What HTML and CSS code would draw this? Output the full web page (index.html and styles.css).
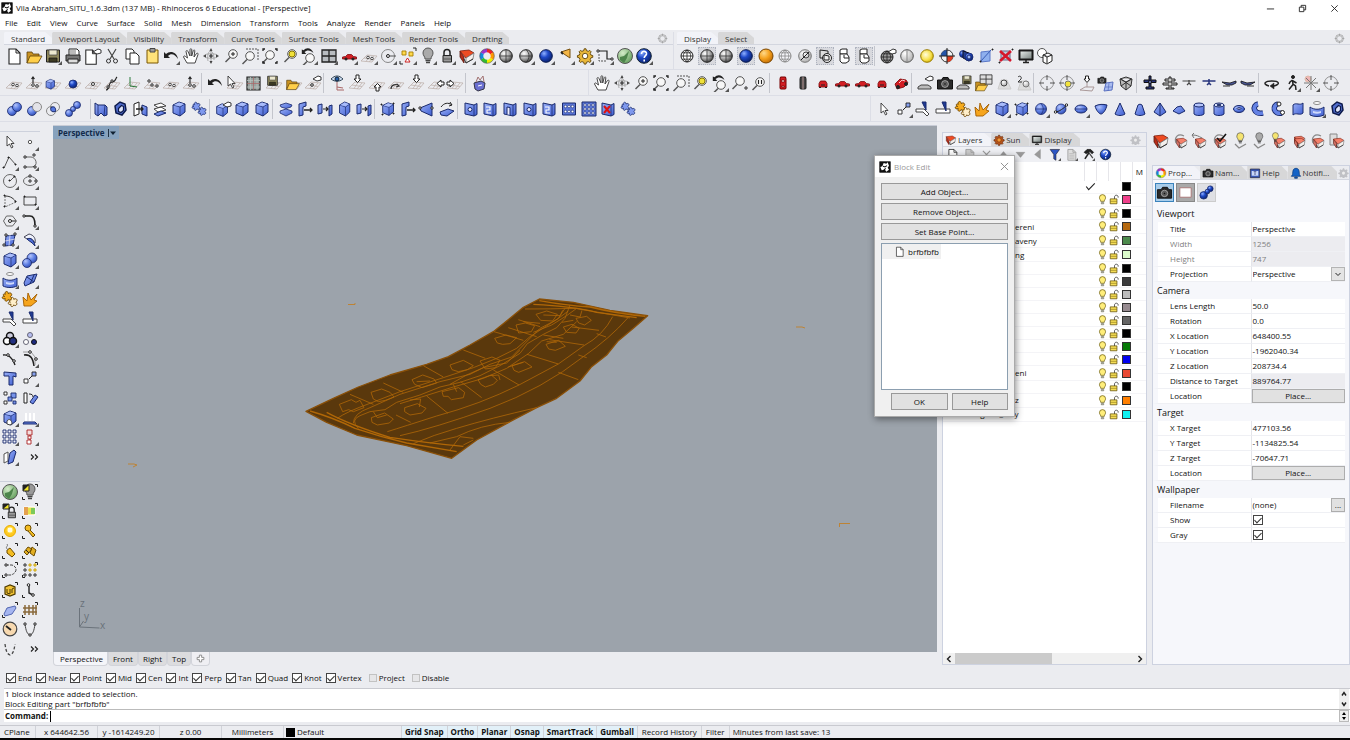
FILE: index.html
```html
<!DOCTYPE html>
<html lang="en">
<head>
<meta charset="utf-8">
<title>Vila Abraham_SITU_1.6.3dm - Rhinoceros 6 Educational</title>
<link rel="stylesheet" href="styles.css">
</head>
<body>
<svg class="defs" aria-hidden="true">
  <defs>
    <radialGradient id="gBlue" cx=".35" cy=".3" r=".8"><stop offset="0" stop-color="#b3c4fb"/><stop offset=".5" stop-color="#5f80e4"/><stop offset="1" stop-color="#2a44a8"/></radialGradient>
    <radialGradient id="gDeep" cx=".35" cy=".3" r=".8"><stop offset="0" stop-color="#8fb0ff"/><stop offset=".4" stop-color="#1f49c8"/><stop offset="1" stop-color="#071c60"/></radialGradient>
    <radialGradient id="gGray" cx=".35" cy=".3" r=".8"><stop offset="0" stop-color="#fff"/><stop offset=".5" stop-color="#aaa"/><stop offset="1" stop-color="#333"/></radialGradient>
    <radialGradient id="gPale" cx=".35" cy=".3" r=".8"><stop offset="0" stop-color="#fff"/><stop offset="1" stop-color="#a9a9a9"/></radialGradient>
    <radialGradient id="gOrange" cx=".35" cy=".3" r=".8"><stop offset="0" stop-color="#ffd98a"/><stop offset=".5" stop-color="#f5a01c"/><stop offset="1" stop-color="#b76400"/></radialGradient>
    <radialGradient id="gYellow" cx=".4" cy=".4" r=".7"><stop offset="0" stop-color="#fffde0"/><stop offset=".6" stop-color="#f7e04a"/><stop offset="1" stop-color="#cba800"/></radialGradient>
    <radialGradient id="gGreen" cx=".35" cy=".3" r=".8"><stop offset="0" stop-color="#d3ecc8"/><stop offset="1" stop-color="#5d9a56"/></radialGradient>
    <linearGradient id="gFace" x1="0" y1="0" x2="1" y2="1"><stop offset="0" stop-color="#9ab0f7"/><stop offset="1" stop-color="#3f5fd2"/></linearGradient>
    <linearGradient id="gScreen" x1="0" y1="0" x2="1" y2="1"><stop offset="0" stop-color="#e3e8e6"/><stop offset="1" stop-color="#7d8784"/></linearGradient>
  </defs>
</svg>

<header class="titlebar">
  <span class="app-icon" data-icon="rhino"></span>
  <h1>Vila Abraham_SITU_1.6.3dm (137 MB) - Rhinoceros 6 Educational - [Perspective]</h1>
  <div class="window-buttons">
    <button aria-label="Minimize"><svg viewBox="0 0 10 10"><path d="M1 5.500h8" class="ln"/></svg></button>
    <button aria-label="Restore"><svg viewBox="0 0 10 10"><path d="M1.500 3.500h5v5h-5zM3.500 3.500v-2h5v5h-2" class="ln"/></svg></button>
    <button aria-label="Close"><svg viewBox="0 0 10 10"><path d="M1.500 1.500l7 7m0-7l-7 7" class="ln"/></svg></button>
  </div>
</header>

<nav class="menubar">
  <button>File</button><button>Edit</button><button>View</button><button>Curve</button><button>Surface</button><button>Solid</button><button>Mesh</button><button>Dimension</button><button>Transform</button><button>Tools</button><button>Analyze</button><button>Render</button><button>Panels</button><button>Help</button>
</nav>

<section class="toolbars">
  <div class="band band-top">
    <div class="group">
      <div class="tabs">
        <button class="tab active">Standard</button><button class="tab">Viewport Layout</button><button class="tab">Visibility</button><button class="tab">Transform</button><button class="tab">Curve Tools</button><button class="tab">Surface Tools</button><button class="tab">Mesh Tools</button><button class="tab">Render Tools</button><button class="tab">Drafting</button>
        <button class="gear" aria-label="Toolbar options" data-icon="cog"></button>
      </div>
      <div class="tools t-standard" data-tools="new open save+ print export cut copy paste undo+ pan orbit zoom zoomwin zoomext zoomsel undoview+ views+ car+ cplane+ osnap+ shapes+ bulb+ lock+ layer+ wheel+ sphere shaded+ bluesphere+ spot+ gearwheel+ dimension+ green help+"></div>
    </div>
    <div class="group">
      <div class="tabs">
        <button class="tab active">Display</button><button class="tab">Select</button>
        <button class="gear" aria-label="Toolbar options" data-icon="cog"></button>
      </div>
      <div class="tools t-display" data-tools="globe *sphere sphere *bluesphere orange ghost xray *tech artistic *pen | globehand pale yellow fourcolor bluecams bluebox redx monitor outline"></div>
    </div>
  </div>
  <div class="band band-mid">
    <div class="group"><div class="tools t-cplane" data-tools="cplane cpup cpbox cpball cpone cpcurve cpz cp3 cplane cpup | undo cparrow grid savecp opencp cphand | cpeye cpdown cpupa cpturn cpdown cpleft cpright | basket"></div></div>
    <div class="group grip"><div class="tools t-view" data-tools="pan orbit zoom zoomext zoomwin zoomsel undoview+ zoomtarget one | cartop carblack carfront car car carfront carangle | carhand camera savecar openviews lampcone lamptwo | target targety axis camplane boxwire | planetop planetop2 planefront planeblue heli heli2 | turn walk+ star+ target"></div></div>
  </div>
  <div class="band band-low">
    <div class="group"><div class="tools t-solid" data-tools="balls ballsub ballint balls2 || folded nut arrowdoor stack cube puzzle | cubehand cube cube | slabs doorin doorout door doorout | cubepts doorin wedge rotslab | holeslab bslab doorslab holeslab bslab gridholes gridholes2 redslab puzzle"></div></div>
    <div class="group grip"><div class="tools t-prims" data-tools="arrow squares+ trimk splitk join burst cube+ cubepts ball+ ballpts ellips+ parab cone tcone pyramid tpyr cyl tube torus pipe pipe2 slab curtain+ nut"></div></div>
  </div>
</section>

<main class="workspace">
  <aside class="sidebar">
    <div class="side-tools side-main" data-tools="arrow dot+ poly+ curve+ circle+ ellipse+ arc+ rect+ hexa+ fillet+ srf+ bend+ cube+ twoballs+ curtain+ mesh+ join burst trimk splitk rings+ tricirc curveedit curvepts+ text squares+ array rotbox cubecut+ extrude+ gridpts+ align+ pair+ more"></div>
    <div class="side-tools side-select" data-tools="green ^bulbsel ^locksel ^colorsel ^glow ^key ^tag ^tags ^curvesel ^ptsel ^boxsel ^linksel ^plate ^fence gauge vee veedash more"></div>
  </aside>

  <section class="viewport-column">
    <div class="viewport">
      <button class="viewport-title">Perspective <svg viewBox="0 0 8 8"><path d="M.5 0v8" stroke="#234"/><path d="M2 2.500h6L5 6z" fill="#123"/></svg></button>
      <svg class="scene" viewBox="0 0 884 526" preserveAspectRatio="xMinYMin slice" role="img" aria-label="Terrain model">
        <g transform="translate(237 159) scale(.33333)" fill="none" stroke="#b06707" stroke-width="2.400" stroke-linejoin="round">
          <path fill="#5a380c" stroke="#8a5008" stroke-width="4" d="M48 379L130 340 205 306 300 270 410 238 475 215 540 180 610 140 660 100 700 67 748 42 850 52 960 76 1073 92 1030 130 985 167 950 210 905 245 870 288 800 340 740 368 660 410 560 465 485 520 350 482 200 450 110 412Z"/>
          <path stroke-width="4" d="M60 378Q130 398 195 430Q270 455 350 474L500 500M110 382Q180 420 300 457Q420 475 520 484M748 47Q830 62 900 66Q980 86 1066 94M730 58Q850 64 920 82L1040 98"/>
          <path d="M705 72Q780 72 858 70L1020 99M685 104L750 125M655 128L740 155M612 140L700 166M520 195L586 220M400 242L460 276M280 294L340 322M180 328L250 358M318 390L362 412M410 333L474 385M512 290L575 338M610 255L687 300M711 208L805 237M778 164L882 180M845 126L927 136M968 95Q940 150 882 182L805 237 687 300Q570 358 440 393Q340 425 292 440M1014 98Q960 160 880 215Q760 310 600 370Q430 430 330 452M920 146L948 156M865 210L890 218M805 262L865 284M740 368Q600 400 500 430Q430 450 370 476M660 412Q570 420 500 455L420 474M550 460L510 455 480 495M520 480L550 465"/>
          <path d="M205 430Q180 405 210 392L240 380 285 374 320 352 390 330 450 306 510 292 570 272 630 242 690 205 712 176 760 148 800 128 825 100 840 60M190 415Q190 385 240 368L330 328 450 290 540 268 600 238 665 216 712 168 750 130 800 104 835 78M142 400Q170 380 240 355L330 320 460 278 550 248 620 220 680 190 720 155 805 100 825 70M330 356L395 336 490 306 580 280 650 250 715 206 755 168 820 148 860 110M480 298L530 270 580 248 650 234 690 196M730 142L785 120 830 92 860 70"/>
          <path d="M148 358L184 344 198 352 210 346 222 368 190 380 176 374 158 380ZM243 322L275 312 300 322 312 336 286 346 265 350 250 342ZM366 284L398 270 432 282 440 294 396 308 374 298ZM480 240L520 226 550 242 532 254 505 260 486 254ZM570 228L606 216 630 226 616 248 586 252ZM614 160L648 150 680 158 660 176 638 178 622 174ZM678 120L706 114 734 122 724 140 686 144ZM738 88L770 78 802 88 788 108 752 106ZM858 100L890 94 904 106 884 120 866 114ZM820 126L846 118 868 130 858 144 830 142ZM768 178L806 166 826 184 796 196 776 192ZM666 242L704 230 726 246 686 262 672 256ZM564 284L604 270 622 286 610 298 586 306 572 298ZM456 320L506 308 524 322 520 338 484 344 474 334 460 334ZM344 368L382 356 408 370 396 384 360 390 344 380ZM244 398L284 384 310 402 298 414 262 420 246 412Z"/>
          <path d="M760 90L810 92 818 76M750 115L700 110M840 90L870 96 876 76M816 112L850 106M760 150L820 160M770 170L800 172M600 272L626 270 630 285M380 290L420 288M360 345L392 342 388 366M250 380L262 398 290 390M490 298L500 320M655 246L700 232"/>
        </g>
        <g fill="none" stroke="#bd8335"><path d="M295 178.500h7v-1.500M743 201h6l3 1M75 338h6l3 1-4 2M786 397.500h11M786.500 397v4"/></g>
        <g fill="none" stroke="#6b737b"><path d="M26.500 482v19l20 1M26.500 501l4-6"/></g>
        <g class="axis-text"><text x="27" y="481">z</text><text x="31" y="494">y</text><text x="47" y="503">x</text></g>
      </svg>
    </div>
    <div class="view-tabs">
      <button class="active">Perspective</button><button>Front</button><button>Right</button><button>Top</button><button class="add" aria-label="Add viewport"><svg viewBox="0 0 8 8"><path d="M3 1h2v2h2v2H5v2H3V5H1V3h2z" fill="#fff" stroke="#777" stroke-width=".7"/></svg></button>
    </div>
  </section>

  <aside class="panel layers">
    <div class="tabs panel-tabs">
      <button class="tab active"><i data-icon="layer"></i>Layers</button><button class="tab"><i data-icon="sun"></i>Sun</button><button class="tab"><i data-icon="monitor"></i>Display</button>
      <button class="gear" aria-label="Panel options" data-icon="cogsolid"></button>
    </div>
    <div class="layer-tools" data-tools="new newgray xgray upgray downgray leftgray filter+ listgray+ hammer+ help"></div>
    <table class="layer-table">
      <thead><tr><th class="name"></th><th></th><th></th><th></th><th></th><th>M</th></tr></thead>
      <tbody id="layer-rows"></tbody>
    </table>
    <div class="hscroll">
      <button aria-label="Scroll left"><svg viewBox="0 0 8 8"><path d="M5.500 1L2.500 4l3 3" class="ln bold"/></svg></button>
      <div class="track"><div class="thumb"></div></div>
      <button aria-label="Scroll right"><svg viewBox="0 0 8 8"><path d="M2.500 1l3 3-3 3" class="ln bold"/></svg></button>
    </div>
  </aside>

  <aside class="properties-column">
    <div class="tools t-layers" data-tools="layer layerarc layerarrow layercheck bulblay bulbgray layerbulb layerarc2 layerarc layerdoc"></div>
    <div class="panel properties">
      <div class="tabs panel-tabs">
        <button class="tab active"><i data-icon="wheel"></i>Prop...</button><button class="tab"><i data-icon="camera"></i>Nam...</button><button class="tab"><i data-icon="helpbook"></i>Help</button><button class="tab"><i data-icon="bell"></i>Notifi...</button>
        <button class="gear" aria-label="Panel options" data-icon="cogsolid"></button>
      </div>
      <div class="modes">
        <button class="on" aria-label="Viewport" data-icon="camera"></button><button class="frame" aria-label="Frame" data-icon="framebox"></button><button aria-label="Material" data-icon="balls2deep"></button>
      </div>
      <h2>Viewport</h2>
      <dl>
        <dt>Title</dt><dd>Perspective</dd>
        <dt class="dim">Width</dt><dd class="dim fill">1256</dd>
        <dt class="dim">Height</dt><dd class="dim fill">747</dd>
        <dt><label for="projection">Projection</label></dt><dd class="select"><select id="projection"><option>Perspective</option></select><svg viewBox="0 0 8 8"><path d="M1.500 3L4 5.500 6.500 3" class="ln"/></svg></dd>
      </dl>
      <h2>Camera</h2>
      <dl>
        <dt>Lens Length</dt><dd>50.0</dd>
        <dt>Rotation</dt><dd>0.0</dd>
        <dt>X Location</dt><dd>648400.55</dd>
        <dt>Y Location</dt><dd>-1962040.34</dd>
        <dt>Z Location</dt><dd>208734.4</dd>
        <dt>Distance to Target</dt><dd class="fill">889764.77</dd>
        <dt>Location</dt><dd class="act"><button class="push">Place...</button></dd>
      </dl>
      <h2>Target</h2>
      <dl>
        <dt>X Target</dt><dd>477103.56</dd>
        <dt>Y Target</dt><dd>-1134825.54</dd>
        <dt>Z Target</dt><dd>-70647.71</dd>
        <dt>Location</dt><dd class="act"><button class="push">Place...</button></dd>
      </dl>
      <h2>Wallpaper</h2>
      <dl>
        <dt>Filename</dt><dd class="file"><span>(none)</span><button class="push">...</button></dd>
        <dt><label for="show">Show</label></dt><dd><input type="checkbox" id="show" checked></dd>
        <dt><label for="gray">Gray</label></dt><dd><input type="checkbox" id="gray" checked></dd>
      </dl>
    </div>
  </aside>

  <section class="dialog" role="dialog" aria-label="Block Edit">
    <header><span data-icon="rhino"></span><h2>Block Edit</h2><button aria-label="Close"><svg viewBox="0 0 10 10"><path d="M1 1l8 8m0-8L1 9" stroke="#888" fill="none"/></svg></button></header>
    <div class="dialog-body">
      <button class="push">Add Object...</button>
      <button class="push">Remove Object...</button>
      <button class="push">Set Base Point...</button>
      <ul class="block-list"><li><i data-icon="new"></i>brfbfbfb</li></ul>
      <div class="dialog-actions"><button class="push">OK</button><button class="push">Help</button></div>
    </div>
  </section>
</main>

<section class="osnap">
  <label><input type="checkbox" checked>End</label><label><input type="checkbox" checked>Near</label><label><input type="checkbox" checked>Point</label><label><input type="checkbox" checked>Mid</label><label><input type="checkbox" checked>Cen</label><label><input type="checkbox" checked>Int</label><label><input type="checkbox" checked>Perp</label><label><input type="checkbox" checked>Tan</label><label><input type="checkbox" checked>Quad</label><label><input type="checkbox" checked>Knot</label><label><input type="checkbox" checked>Vertex</label><label class="wide"><input type="checkbox" class="faint">Project</label><label class="wide"><input type="checkbox" class="faint">Disable</label>
</section>

<section class="command">
  <div class="history"><p>1 block instance added to selection.</p><p>Block Editing part "brfbfbfb"</p>
    <div class="arrows"><svg viewBox="0 0 8 8"><path d="M2 5.500l2-3 2 3" class="ln bold"/></svg><svg viewBox="0 0 8 8"><path d="M2 2.500l2 3 2-3" class="ln bold"/></svg></div>
  </div>
  <div class="prompt"><label for="cmd">Command:</label><span class="caret"></span><input id="cmd" type="text">
    <div class="arrows boxed"><svg viewBox="0 0 8 5"><path d="M2 4l2-3 2 3z"/></svg><svg viewBox="0 0 8 5"><path d="M2 1l2 3 2-3z"/></svg></div>
  </div>
</section>

<footer class="status">
  <span class="s-cplane">CPlane</span><span class="s-num">x 644642.56</span><span class="s-num">y -1614249.20</span><span class="s-num">z 0.00</span><span class="s-num">Millimeters</span><span class="s-layer"><i></i>Default</span>
  <button class="on">Grid Snap</button><button class="on">Ortho</button><button class="on">Planar</button><button class="on">Osnap</button><button class="on">SmartTrack</button><button class="on">Gumball</button><button>Record History</button><button>Filter</button><span class="s-last">Minutes from last save: 13</span>
</footer>
<script src="app.js"></script>
</body>
</html>
```
FILE: styles.css
```css
* { box-sizing: border-box; }
body {
  margin: 0;
  min-height: 100vh;
  display: flex;
  flex-direction: column;
  background: #ebecf0;
  color: #111;
  font: 8px/12px "Open Sans", "Noto Sans", sans-serif;
  overflow: hidden;
}
button, input, select { font: inherit; color: inherit; margin: 0; }
button { background: none; border: 0; padding: 0; white-space: nowrap; }
h1, h2, p, ul, dl, dd, dt { margin: 0; padding: 0; font-weight: 400; }
ul { list-style: none; }
svg { display: block; }
.defs { position: absolute; width: 0; height: 0; }
.ln { fill: none; stroke: #222; stroke-width: 1; }
.bold { stroke-width: 1.4; }

.titlebar { display: flex; align-items: center; height: 16px; background: #fff; padding-left: 1px; gap: 3px; }
.titlebar h1 { font-size: 8px; flex: 1; }
.app-icon svg { width: 12px; height: 12px; }
.window-buttons { display: flex; }
.window-buttons button { width: 32px; display: grid; place-items: center; }
.window-buttons svg { width: 9px; height: 9px; }
.menubar { display: flex; gap: 9px; padding-left: 5px; height: 14px; background: #fff; }
.menubar button { line-height: 14px; }

.toolbars { display: flex; flex-direction: column; padding-top: 2px; height: 95px; }
.band { display: grid; border-bottom: 1px solid #dcdee6; height: 26px; }
.band-top { grid-template-columns: 673fr 677fr; height: 38px; }
.band-mid { grid-template-columns: 588fr 762fr; }
.band-low { grid-template-columns: 870fr 480fr; }
.group { display: flex; flex-direction: column; min-width: 0; padding-left: 4px; border-left: 1px solid #dcdee6; justify-content: center; }
.group:first-child { border-left: 0; }
.band-top .group { justify-content: flex-start; padding-left: 3px; }
.band-top .group:first-child { padding-left: 4px; }
.band:not(.band-top) .grip { padding-left: 3px; }
.tools { display: flex; align-items: center; height: 22px; }
.t-standard { width: 650px; }
.t-display { width: 378px; }
.t-cplane { width: 485px; }
.t-view { width: 749px; }
.t-solid { width: 634px; }
.t-prims { width: 473px; }
.t-layers { width: 197px; height: 32px; }
.tool { flex: 1 1 0; min-width: 0; display: grid; place-items: center; }
.tool svg { width: 18px; height: 18px; }
.tool.boxed svg { background: #d8d9de; outline: 1px dotted #aeb3bf; outline-offset: -1px; }
.sep { flex: 0 0 4px; height: 20px; border-left: 1px solid #c3c5cc; }
.sep.double { flex-basis: 8px; border-right: 1px solid #c3c5cc; border-left: 0; }

.tabs { display: flex; height: 13px; border-bottom: 1px solid #d3d6df; }
.tab {
  padding: 0 7px;
  line-height: 13px;
  background: #d7d7d8;
  color: #333;
  clip-path: polygon(0 100%, 0 1px, 1px 0, calc(100% - 7px) 0, 100% 6px, 100% 100%);
}
.tab.active { background: #f2f3f8; }
.gear { margin-left: auto; padding-right: 5px; }
.gear svg { width: 11px; height: 11px; }

.workspace { flex: 1; display: flex; position: relative; min-height: 0; }
.sidebar { width: 53px; flex: none; padding: 6px 13px 0 0; }
.side-tools { display: grid; grid-template-columns: 1fr 1fr; grid-auto-rows: 1fr; border-top: 1px solid #cdd1dc; }
.side-main { height: 336px; }
.side-select { height: 178px; margin-top: 14px; }

.viewport-column { flex: 1; min-width: 0; display: flex; flex-direction: column; }
.viewport { flex: 1; min-height: 0; position: relative; background: #9ca3ab; overflow: hidden; border-top: 1px solid #c8ccd6; }
.viewport-title { position: absolute; left: 0; top: 0; z-index: 1; display: flex; align-items: center; gap: 4px; height: 13px; padding: 0 3px 0 5px; background: #87a2bd; font-weight: 700; color: #122a4a; }
.viewport-title svg { width: 8px; height: 8px; }
.scene { width: 100%; height: 100%; }
.axis-text { font-size: 10px; fill: #697179; }
.view-tabs { display: flex; height: 17px; padding-bottom: 3px; }
.view-tabs button { background: #dcdcde; padding: 0 4px; border-radius: 0 0 4px 4px; border: 1px solid #d2d4da; border-top: 0; height: 14px; }
.view-tabs .active { background: #f4f5f9; padding-left: 6px; }
.view-tabs .add { background: #efeff3; padding: 0 4px; }
.add svg { width: 9px; height: 9px; }

.panel { border: 1px solid #cdd2e0; background: #f6f7fb; display: flex; flex-direction: column; }
.layers { width: 205px; flex: none; margin: 7px 4px 4px 5px; background: #fff; }
.panel-tabs { height: 14px; background: #ebecf0; flex: none; }
.panel-tabs .tab { display: flex; align-items: center; gap: 1px; padding: 0 9px 0 2px; }
.panel-tabs i svg { width: 12px; height: 12px; }
.layer-tools { display: flex; height: 15px; background: #eff0f4; padding-left: 1px; width: 100%; flex: none; }
.layer-tools .tool { flex: 0 0 17px; }
.layer-tools .tool svg { width: 13px; height: 13px; }
.layer-table { width: 100%; height: 260px; border-collapse: collapse; table-layout: fixed; flex: none; }
.layer-table th, .layer-table td { padding: 0; width: 12px; font-weight: 400; text-align: center; line-height: 12px; white-space: nowrap; }
.layer-table th { height: 19px; border-left: 1px solid #e6e6ea; }
.layer-table th.name { width: auto; border: 0; }
.layer-table th:last-child, .layer-table td:last-child { width: 14px; }
.layer-table td { border-bottom: 1px solid #f4f4f7; }
.layer-table td:first-child { text-align: left; }
.layer-table td span { display: block; padding-left: 72px; }
.layer-table td span.full { padding-left: 28px; }
.layer-table td svg { width: 11px; height: 11px; margin: auto; }
.swatch { display: block; width: 9px; height: 9px; margin: auto; border: 1px solid #333; }
.hscroll { margin-top: auto; display: flex; height: 11px; background: #f0f0f0; }
.hscroll button { width: 12px; display: grid; place-items: center; }
.hscroll svg { width: 8px; height: 8px; }
.track { flex: 1; }
.thumb { width: 54%; height: 100%; background: #cbcbcb; }

.properties-column { width: 199px; flex: none; display: flex; flex-direction: column; padding-bottom: 4px; }
.properties { flex: 1; margin: 8px 0 0 1px; }
.properties .panel-tabs .tab { padding-right: 8px; clip-path: polygon(0 0, calc(100% - 6px) 0, 100% 6px, 100% 100%, 0 100%); }
.properties .gear { padding: 0; }
.modes { display: flex; gap: 2px; padding: 3px 0 0 2px; height: 25px; }
.modes button { width: 19px; height: 19px; display: grid; place-items: center; background: #dfe0e4; border: 1px solid #ccc; }
.modes .on { background: #a9cdea; border-color: #3b83bc; }
.modes .frame { background: #a9a9a9; border-color: #888; }
.modes svg { width: 17px; height: 17px; }
.properties h2 { font-size: 9px; line-height: 17px; padding-left: 4px; }
.properties dl { display: grid; grid-template-columns: 97fr 94fr; grid-auto-rows: 15px; margin-right: 4px; background: #fff; }
dt, dd { line-height: 14px; border-bottom: 1px solid #eff0f4; }
dt { padding-left: 12px; border-left: 5px solid #f6f7fb; }
dd { padding-left: 1px; border-left: 1px solid #e4e5ea; }
.dim { color: #808080; }
.fill { background: #ececf0; }
.push { background: #e1e1e1; border: 1px solid #adadad; line-height: 12px; text-align: center; }
.act { padding-left: 0; }
.act .push { width: 100%; height: 14px; }
.file { display: flex; justify-content: space-between; }
.file .push { width: 14px; height: 14px; }
.select { display: flex; }
.select select { appearance: none; border: 0; background: none; padding: 0; flex: 1; min-width: 0; }
.select svg { width: 14px; height: 14px; padding: 2px; background: #e4e4e4; border: 1px solid #b4b4b4; }

input[type="checkbox"] { appearance: none; width: 10px; height: 10px; border: 1px solid #444; background: #fff; display: inline-grid; place-items: center; vertical-align: middle; }
input[type="checkbox"]:checked::after { content: ""; width: 3px; height: 6px; border: solid #333; border-width: 0 1px 1px 0; transform: rotate(45deg); margin-bottom: 2px; }
dd input[type="checkbox"] { display: grid; margin-top: 2px; }
input.faint { border-color: #c2c2c2; background: #e6e6e8; width: 8px; height: 8px; }

.dialog { position: absolute; top: 30px; right: 335px; width: 141px; background: #f0f0f0; border: 1px solid #aaa; box-shadow: 1px 2px 7px rgba(0, 0, 0, .45); }
.dialog header { display: flex; align-items: center; gap: 3px; height: 21px; padding: 0 5px 0 4px; background: #fff; }
.dialog header h2 { flex: 1; color: #999; font-size: 8px; }
.dialog header span svg { width: 12px; height: 12px; }
.dialog header button svg { width: 9px; height: 9px; }
.dialog-body { display: flex; flex-direction: column; gap: 3px; padding: 6px; }
.dialog .push { height: 17px; line-height: 15px; border-color: #999; }
.block-list { height: 147px; background: #fff; border: 1px solid #8c9fb0; }
.block-list li { display: inline-flex; align-items: center; gap: 3px; background: #f0f0f0; height: 15px; padding: 0 2px 0 12px; }
.block-list svg { width: 11px; height: 11px; }
.dialog-actions { display: flex; gap: 4px; padding-left: 10px; }
.dialog-actions .push { flex: 1; }

.osnap { display: flex; align-items: center; gap: 4px; height: 19px; padding: 0 0 1px 6px; }
.osnap label { display: flex; align-items: center; gap: 2px; }
.osnap .wide { margin-left: 3px; }
.command { border-top: 1px solid #c9cad0; background: #fff; margin-left: 4px; }
.history { position: relative; height: 21px; padding-left: 1px; border-bottom: 1px solid #bbb; }
.history p { line-height: 10px; }
.prompt { position: relative; display: flex; height: 12px; align-items: center; padding-left: 1px; }
.prompt label { font-weight: 700; }
.prompt input { flex: 1; border: 0; outline: 0; background: none; padding: 0 2px; height: 11px; }
.caret { width: 1px; height: 11px; background: #000; margin-left: 2px; }
.arrows { position: absolute; right: 1px; top: 0; bottom: 0; width: 10px; background: #efefef; display: flex; flex-direction: column; justify-content: space-around; align-items: center; }
.arrows svg { width: 8px; height: 8px; }
.arrows.boxed { border: 1px solid #bbb; }
.arrows.boxed svg { height: 5px; }

.status { display: flex; height: 15px; border-top: 1px solid #c9cad0; border-bottom: 2px solid #050505; margin-top: 3px; line-height: 12px; }
.status > * { border-right: 1px solid #d0d2d8; padding: 0 4px; white-space: nowrap; }
.s-cplane { width: 36px; }
.s-num { width: 62px; text-align: center; }
.s-layer { width: 118px; display: flex; align-items: center; gap: 2px; }
.s-layer i { width: 9px; height: 9px; background: #000; margin-left: -2px; }
.status .on { font-weight: 700; background: #e2f0f8; padding: 0 3px; }
.status .s-last { border: 0; padding-left: 3px; }
```
FILE: app.js
```js
// Small drawing helpers; every icon lives in an 18 x 18 box.
const K = '#222', B = '#1a2a6c';
const p = (d, fill = 'none', stroke = K, w = 1) => `<path d="${d}" fill="${fill}" stroke="${stroke}" stroke-width="${w}"/>`;
const c = (x, y, r, fill = 'none', stroke = K, w = 1) => `<circle cx="${x}" cy="${y}" r="${r}" fill="${fill}" stroke="${stroke}" stroke-width="${w}"/>`;
const g = (t, s) => `<g transform="${t}">${s}</g>`;
const sq = (x, y, s = 3, f = '#fff', k = K) => p(`M${x} ${y}h${s}v${s}h-${s}z`, f, k, .9);

const cube = p('M3 5l6-3 6 2v8l-5 4-7-3z', 'url(#gFace)', B) + p('M3 5l7 2 5-3M10 7v9', 'none', B, .7) + p('M4 5l5-2.500 5 1.500-4 2.300z', '#a9bcfa', 'none');
const slab = p('M3 3l9 2 3-1.500v11L12 16 3 14z', 'url(#gFace)', B) + p('M12 5v11', 'none', B, .8);
const plane = p('M1 14l6-6 10 1-5 6zM4 11l10 1.500M10 8.500l-4 6M14 9l-5 6', 'none', '#bfb2ad', .8);
const hand = p('M9 5l5-3 3 1v3l-4 1z', '#fff', K, .9);
const mag = (x, y) => c(x, y, 4.3, '#f7f7f7', '#555') + p(`M${x - 3} ${y + 3.500}l-4.500 4.500`, 'none', '#555', 1.5);
const layer = p('M2 4l4 6v6L2 10z', '#b72c18', '#5a1a10', .8) + p('M2 4l9-1 5 3-8 5z', '#ee4b22', '#7d1d0c', .8) + p('M8 11l8-5-1 6-7 4z', '#f3efec', '#777', .8) + p('M6 12l2 4 7-4', 'none', '#333', 1);
const layerS = g('translate(3 4) scale(.75)', layer).replace('#ee4b22', '#f4806a').replace('#b72c18', '#cf6e62');
const bulb = f => p('M6 12C6 9 4 9 4 6a5 5 0 0 1 10 0c0 3-2 3-2 6z', f, '#555') + p('M6.500 13.500h5M7 15.500h4', 'none', '#444', 1.300);
const lock = p('M6 9V5.500a3 3 0 0 1 6 0V9', 'none', K, 1.500) + p('M5 8.500h8.500V15H5z', '#999', K) + p('M5 12h8', 'none', '#555');
const globe = (f, k) => c(9, 9, 6, f, k) + p('M9 3v12M3 9h12M4 5.800h10M4 12.200h10M9 3c-5 4-5 8 0 12c5-4 5-8 0-12', 'none', k, .8);
const redcar = p('M2.500 10l3-.5 2-2h4l2 2 3 .5v2h-14z', '#d31e24', '#7c0c10', .8) + c(6, 12, 1.100, '#222') + c(13, 12, 1.100, '#222');
const tgt = c(9, 9, 6.500, 'none', '#888', .9) + p('M9 1v5M9 12v5M1 9h5M12 9h5', 'none', '#555', 1);
const piece = (f, k) => p('M6 6C4 2 10 0 10 5C14 2 17 7 13 9C17 12 12 16 10 13C9 17 4 16 6 12C1 14 0 8 5 9C2 8 3 4 6 6z', f, k, 1.300);
const cam = p('M1.500 6h4l1.500-2.500h5L13.500 6h3v9h-15z', '#2a2a2a', '#111') + c(9, 10, 3.400, '#555', '#bbb', .8) + c(9, 10, 1.300, '#111', '#888', .6);
const save = p('M2.500 3h13v12h-13z', '#8c865a', K) + p('M5 3h8v5H5z', '#ece9cf', '#444', .7) + p('M5 11h8v4H5z', '#3c3a22', '#111', .7);
const folder = p('M2 5h5l1 2h6v3H6l-4 6z', '#c99222', '#5a400a', .8) + p('M5 9h12l-4 7H2z', '#ffcf4a', '#5a400a', .8);
const doc = (f = '#fff', k = K) => p('M4 2h7l4 4v11H4z', f, k, 1.100) + p('M11 2v4h4', 'none', k);
const arrow = p('M6 3v10l2.500-2 2 4 1.500-1-2-3.500H13z', '#fff', '#333', .9);
const ball = (x, y, r, f = 'url(#gBlue)') => c(x, y, r, f, B, .8);
const origin = c(8, 10.500, 1.300, '#fff', '#333', .9) + c(12, 11.500, 1.300, '#fff', '#333', .9);
const heli = p('M2 8l8 1 6-2v2l-4 2H7z', '#4a5796', '#111', .8) + p('M3 12h7', 'none', '#333');
const cp = s => plane + s;
const tri = (d, f = '#999') => p(d, f, '#888', .6);
const dashed = (s, d) => s.replace('/>', ` stroke-dasharray="${d}"/>`);
const oval = (x, y, rx, ry, f, k = B) => `<ellipse cx="${x}" cy="${y}" rx="${rx}" ry="${ry}" fill="${f}" stroke="${k}"/>`;
const gearPath = 'M8 2h2l.5 2 2 .8 1.700-1 1.500 1.500-1 1.700.8 2 2 .5v2l-2 .5-.8 2 1 1.700-1.500 1.500-1.700-1-2 .8-.5 2H8l-.5-2-2-.8-1.700 1-1.500-1.500 1-1.700-.8-2-2-.5v-2l2-.5.8-2-1-1.700 1.500-1.500 1.700 1 2-.8z';

const icons = {
  rhino: p('M1 1h16v16H1z', '#111', '#111') + p('M2 9l3-1 2-5 4 1 2-2 2 5-2 3 2 3-4 3-2-3-5 1z', '#fff', 'none') + p('M6 8l3 1 3-2M10 11l-4 4', 'none', '#111', 1.600),
  cog: c(9, 9, 6.500, 'none', '#888') + c(9, 9, 4.500, 'none', '#999') + p('M9 1v4M9 13v4M1 9h4M13 9h4', 'none', '#999'),
  cogsolid: p(gearPath, '#c0c1c5', 'none') + c(9, 10, 2.500, '#eee', 'none'),
  new: doc(), newgray: doc('#ccc', '#999'), open: folder, save,
  print: p('M5 8V2h8l2 2v4', '#fff', K) + p('M2 8h14v6H2z', '#777', K) + p('M4 12h10v4H4z', '#ddd', K) + p('M6 4h6M6 6h6', 'none', '#777'),
  export: g('translate(-2 1) scale(.95)', doc()) + hand,
  cut: p('M5 2l6 10M13 2L7 12', 'none', '#444', 1.200) + c(5.500, 14, 2, 'none', '#333') + c(12.500, 14, 2, 'none', '#333'),
  copy: p('M3 2h6l2 2v8H3z', '#fff') + p('M7 6h6l3 3v8H7z', '#fff'),
  paste: p('M4 3h11v13H4z', '#ffe37a', '#7a5600') + p('M7 1.500h5V5H7z', '#999', '#444'),
  undo: p('M2 5v6h6l-2-2c3-3 7-2 10 3-1-7-8-9-12-5z', '#222', 'none'),
  pan: p('M5 16L1.500 10c0-1 1-1.500 2-.5L5.500 11 4 4.500c0-1 1.500-1.500 2 0L8 9V2.500c0-1 1.700-1 1.700 0V9l1.600-5.500c.5-1 1.700-.5 1.500.5L12 10l2.500-3.500c1-.8 2 0 1.500 1L13 16z', '#fff', '#333', .9),
  orbit: p('M2 9c0-3 14-3 14 0s-14 3-14 0M9 2v14M6 14c-2-12 6-14 6-1', 'none', '#999', .8) + p('M9 1l1.500 3h-3zM9 17l1.500-3h-3zM1 9l3-1.500v3zM17 9l-3-1.500v3z', '#444', 'none') + p('M7 9h4M9 7v4'),
  zoom: mag(11, 7) + p('M9 7h4M11 5v4'),
  zoomwin: mag(9, 9) + dashed(p('M5 2h12v11', 'none', '#555', 1), '2 1'),
  zoomext: mag(9, 8) + p('M2 4V2h2M14 2h2v2M16 14v2h-2M4 16H2v-2', 'none', K, 1.300),
  zoomsel: mag(11, 7) + c(11, 7, 3, '#f0e13a', '#887700'),
  undoview: mag(10, 11) + g('translate(0 -3) scale(.9)', p('M2 6v5h5l-2-2c3-3 7-2 10 1-2-6-8-7-11-3z', '#222', 'none')),
  zoomtarget: mag(9, 7) + sq(14, 13, 2),
  one: mag(10, 8) + p('M8.500 6v4M11.500 6v4', 'none', K, 1.100),
  views: p('M2 3h14v12H2zM9 3v12M2 9h14', '#b8bcc0', '#222', 1.300),
  car: redcar, cplane: cp(origin),
  cpone: cp(c(9, 10, 1.500, '#fff', '#333')), cpturn: cp(p('M4 15c0-4 5-6 8-3M10 10l2 2-3 1', 'none', '#333', 1.200)),
  osnap: c(9, 9, 6.500, 'none', '#888') + c(9, 9, 1.500) + p('M10 9h7', 'none', '#555'),
  shapes: sq(3, 4, 4, '#ffd94d', '#a78000') + sq(10, 5, 4, '#ffd94d', '#a78000') + p('M6 15l2.500-4 2.500 4z', '#fff', '#c22') + p('M14 1h3v3M1 14v3h3'),
  bulb: bulb('#aaa'), lock, layer,
  wheel: ['#e22', '#f90', '#ee0', '#3b3', '#18d', '#93c'].map((k, i) => g(`rotate(${i * 60} 9 9)`, p('M9 3.500A5.500 5.500 0 0 1 13.800 6.300', 'none', k, 3.500))).join('') + c(9, 9, 7.300, 'none', '#555', .6),
  sphere: c(9, 9, 6.300, 'url(#gGray)', '#222') + p('M9 2.500v13M3 9h12', 'none', '#333', .8),
  shaded: c(9, 9, 6.300, 'url(#gGray)', '#222') + p('M9 2.500c4 4 4 9 0 13M3 9h12', 'none', '#333', .8),
  bluesphere: c(9, 9, 6.300, 'url(#gDeep)', '#0a1a50'), orange: c(9, 9, 7, 'url(#gOrange)', '#7a4500'),
  spot: p('M4 5l9-3v9z', '#f4b646', '#775010') + p('M4 5l2 2', 'none', K, 2),
  gearwheel: g('translate(1 0) scale(.9)', p(gearPath, '#e8b73a', '#5c4208') + c(9, 10, 3, '#fff', '#5c4208')),
  dimension: p('M3 4h8v8h5', 'none', K, 1.200) + sq(1, 3, 2) + sq(15, 11, 2) + dashed(p('M3 7v7h8', 'none', '#555'), '2 1'),
  green: c(9, 9, 7.500, 'url(#gGreen)', '#555') + p('M4 10l4-1 5-5-2 7-3 5-4-3z', '#4d854b', 'none'),
  help: c(9, 9, 7.300, 'url(#gDeep)', '#123') + p('M6.500 7c0-4 5.500-3 5 0-.3 1.500-2.300 2-2.300 4M9.200 12.500v2', 'none', '#fff', 1.600),
  globe: globe('#fff', '#222'), ghost: globe('#f4f4f8', '#888'),
  xray: c(9, 9, 6.300, 'url(#gPale)', '#777') + c(10, 8, 3, 'none', '#444') + p('M5 13l8-8'),
  tech: p('M4 3l8 1v7H4z', '#ddd', '#222') + c(11, 11, 4.500, '#eee', '#222') + p('M8 8l5 1v4H8z', 'none', '#222'),
  artistic: p('M5 3l2-1h5v5H5z', '#fff') + p('M5 7h7l2 3v4l-3 2H7l-2-2z', '#fff') + p('M9 8v3h5', 'none', '#222'),
  pen: p('M5 3l2-1h5v5H5z', '#fff') + p('M5 7h7l2 3v4l-3 2H7l-2-2z', '#fff') + p('M9 8v3h5', 'none', '#222'),
  globehand: g('translate(-1 1)', globe('#999', '#222')) + hand,
  pale: c(9, 9, 6.300, 'url(#gPale)', '#555') + p('M9 2.500v13', 'none', '#888'), yellow: c(9, 9, 6.300, 'url(#gYellow)', '#997c00'),
  fourcolor: c(9, 9, 6, '#f2f2f2', '#333') + p('M9 9V3a6 6 0 0 0-6 6z', '#2455a8', 'none') + p('M9 9v6a6 6 0 0 0 6-6z', '#e33c20', 'none') + p('M9 1v16M1 9h16'),
  bluecams: ball(6, 7, 3.500, 'url(#gDeep)') + p('M6 4l6 2v8l-6-3z', '#25408f', '#112') + ball(12, 10, 4, 'url(#gDeep)') + c(12, 10, 2, '#9fb8f5', B),
  bluebox: p('M4 5l9-1v10l-9 1z', '#8fb0ee', '#5a78c8') + sq(3, 14, 1, K) + sq(15, 2, 1, K) + p('M4 14L14 3', 'none', '#3a5cb5'),
  redx: p('M4 4h9v9H4z', '#bcd', '#668') + p('M3 4l11 10M14 4L3 14', 'none', '#d5172b', 2.600) + sq(15, 2, 1, K) + sq(2, 15, 1, K),
  monitor: p('M2 3h14v10H2z', '#222', '#111') + p('M3.500 4.500h11v7h-11z', 'url(#gScreen)', 'none') + p('M6 15.500h6M9 13v2', 'none', '#222', 1.500),
  outline: c(6, 6, 4.500, '#fff', '#555') + p('M7 8l5-2 4 2v6l-5 3-4-2zM7 8l4 2 5-2M11 10v6', '#fff', '#222'),
  cpup: cp(c(8, 11, 1.300, '#fff', '#333') + c(12, 12, 1.300, '#fff', '#333') + p('M8 9V3M6.500 5L8 3l1.500 2', 'none', K, 1.100)), cpbox: cp(g('translate(0 4) scale(.7)', cube)),
  cpball: cp(ball(9, 10, 4, 'url(#gDeep)')), cpcurve: cp(p('M3 16c4 0 2-8 6-8s3-3 5-5', 'none', K, 1.100) + sq(8, 6, 2) + sq(4, 12, 2)),
  cpz: cp(p('M7 3v9l7 1', 'none', '#2a7a3a')), cp3: cp(c(6, 7, 1.200, '#fff') + c(9, 11, 1.200, '#fff') + c(14, 12, 1.200, '#fff')),
  cparrow: cp(g('translate(-4 -1)', arrow)), grid: p('M2 3h13v13H2z', '#99a29f', '#222', 1.200) + p('M5.500 3v13M12 3v13M2 6.500h13M2 13h13', 'none', '#b8c2be', .8) + p('M8.500 3v13M2 9.500h13', 'none', '#a66', .7),
  savecp: cp(g('scale(.75) translate(1 0)', save)), opencp: cp(g('translate(0 2) scale(.85)', folder)),
  savecar: p('M1 13l3-2h6l3 2v2H1z', '#bbb', '#444') + g('translate(5 0) scale(.65)', save), openviews: g('scale(.85) translate(4 -1)', p('M2 2h14v11H2zM9 2v11M2 7h14', '#ddd', '#333')) + g('translate(-1 4) scale(.8)', folder),
  cphand: cp(hand + c(8, 11, 1.300, '#fff')), cpeye: p('M3 5c4-4 8-4 12 0-4 3-8 3-12 0z', '#cfe0f4', '#345') + c(9, 5, 2, '#245ea8', '#123') + p('M9 8v8h7M9 13l6 1', 'none', '#a66'),
  cpdown: cp(p('M8 1h3v4h2L9.500 8.500 6 5h2z', '#fff')), cpupa: cp(p('M8 17h3v-4h2L9.500 9.500 6 13h2z', '#fff')),
  cpleft: cp(p('M17 8v3h-3v2l-4-3.500L14 6v2z', '#fff')), cpright: cp(p('M1 8v3h3v2l4-3.500L4 6v2z', '#fff')),
  basket: p('M4 9l7-2 4 2-1 6-6 2-3-2z', '#6a6fd0', '#334') + p('M6 8l2-5 2 3 3-4 1 6', 'none', '#a07070') + p('M8 12l4-1', 'none', '#fff'),
  cartop: p('M6.500 3h5l.5 2v9l-.5 1h-5L6 14V5z', '#d31e24', '#700') + p('M7.500 6h3v2h-3zM7.500 12h3v1h-3z', '#f4dada', '#700', .7),
  carblack: p('M6.500 3h5l.5 2v9l-.5 1h-5L6 14V5z', '#444', '#222') + p('M9 3v12', 'none', '#b99'),
  carfront: p('M5 9.500L6.500 7h5L13 9.500V13H5z', '#d31e24', '#700', .8) + p('M5 13.500h2M11 13.500h2M7 11h4', 'none', '#222', 1.200),
  carangle: p('M3 10l5-5 6 1 2 3-4 4-7 2z', '#d31e24', '#700', .8) + c(6, 13, 1.500, '#222') + c(14, 10, 1.500, '#222') + p('M7 9l3-3 3 1', 'none', '#fcc'),
  carhand: p('M2 13l3-2h7l3 2v2H2z', '#bbb', '#444') + hand, camera: cam,
  lampcone: p('M3 15l3-9h6l4 9z', '#ddd', '#ccc') + c(9, 9, 3, 'url(#gPale)', '#444'), lamptwo: p('M3 16l3-9h6l4 9z', '#ddd', '#ccc') + c(11, 10, 3, 'url(#gPale)', '#777') + p('M3 3c2-2 4 0 3 2L3 8h4', 'none', '#333'),
  target: tgt, targety: tgt + c(10, 10, 3, '#f2e33c', '#776'), axis: p('M2 16l5-3h9l-2 4zM9 9v4', 'none', '#a99') + p('M7.500 2h3v3h1.500L9 8.500 6 5h1.500z', '#fff'),
  camplane: g('translate(0 1) scale(.55)', cam) + p('M9 9l7-1-1 8-8 1z', '#a9bcf0', '#5a70c0') + p('M12 9l-1 8M8 13h8', 'none', '#5a70c0', .7),
  boxwire: p('M3 5l6-2 6 2-1 7-5 4-5-4zM3 5l6 3 6-3M9 8v8M4 5l10 7M14 5L4 12', '#bbb', '#333', 1),
  planetop: p('M8 2h2v4h5v2.500h-5V13h3v2H5v-2h3V8.500H3V6h5z', '#28357c', '#111') + c(9, 8, 1.500, '#7a88cc', '#111'),
  planetop2: p('M8 3h2v2h4v2h-4v2h6v2h-6v3h3v1H5v-1h3v-3H2V9h6V7H4V5h4z', '#ccc', '#222'),
  planefront: p('M2.500 7h13M9 6v4M7 11l2-2 2 2', 'none', '#444', 1.200), planeblue: p('M2.500 7h13M9 5v5M7 11l2-2 2 2', 'none', '#28357c', 1.500), heli, heli2: g('translate(18 0) scale(-1 1)', heli),
  turn: p('M6 12C-1 10 2 7 9 7s9 3 2 5', 'none', K, 1.400) + p('M11 9v6l-4-3z', K, K, .5),
  walk: c(10, 3, 1.500, K) + p('M9.500 6L7 8l-1 2M9.500 6l.5 4.500-4 5M10 10l2.500 2 .5 4M10 7l3.500 2', 'none', K, 1.500),
  star: c(6, 5, 3, '#f0b5b5', '#dba') + p('M9 2v14M2 9h14M4 4l10 10M14 4L4 14', 'none', '#777', 1),
  balls: ball(7, 11, 4.500) + ball(12, 7, 4.500), ballsub: ball(7, 11, 4.500) + c(12, 7, 4.500, '#e3e3e8', '#888'),
  ballint: c(7, 11, 4.500, 'none', '#888') + c(11, 7, 4.500, 'none', '#888') + p('M7 7.500c4-2 5 1 4.500 4-4 1-5.500-1-4.500-4z', '#5577e0', B), balls2: ball(13, 5, 3.500) + ball(5, 13, 3.500) + ball(9, 9, 2.500),
  balls2deep: ball(13, 5, 3, 'url(#gDeep)') + ball(6, 12, 4, 'url(#gDeep)') + ball(10, 8, 2.500, 'url(#gDeep)'),
  folded: p('M3 3l3 2h7l2 2v8l-3 1-3-3-3 3-3-2z', 'url(#gFace)', B) + p('M6 5v11M13 5l-1 11', 'none', B, .8),
  nut: p('M4 6l5-4 5 2 1 6-4 5-6-2z', '#4f6ccc', '#0d1a4a', 1.500) + p('M7.500 8.500l3-3 2 1v4l-2.500 2-2.500-1z', '#dfe6fb', '#0d1a4a', 1.200),
  arrowdoor: p('M3 4l5-2v12l-5 2z', '#fff') + p('M11 5l5 2v9l-5-2z', 'url(#gFace)', B) + p('M5 9h7M10 7l2 2-2 2', 'none', K, 1.300),
  stack: p('M3 5l7-2 5 3-8 1.500zM3 9l7-2 5 3-8 2z', '#fff', '#444') + p('M3 14l7-3 5 2-8 3z', 'url(#gFace)', B), cube,
  puzzle: g('translate(1 1) scale(.6)', piece('#7f99ee', B)) + g('translate(7 6) scale(.6)', piece('#7f99ee', B)),
  cubehand: g('translate(0 2) scale(.9)', cube) + hand,
  slabs: p('M3 5l6-2 6 2-1 2-5 1.500-5-1.500z', 'url(#gFace)', B, .8) + p('M3 11l6-2 6 2v2l-6 3-6-3z', 'url(#gFace)', B, .8), doorin: p('M3 4l7-2v4l-3 1v8l-4 1z', 'url(#gFace)', B) + p('M8 10h8M14 8l2 2-2 2', 'none', K, 1.300),
  doorout: p('M2 5l4-1v9l-4 1zM13 6l3-1v9l-3 2z', 'url(#gFace)', B) + p('M7 9h5M10 7l2 2-2 2', 'none', K, 1.200), door: g('translate(1 0) scale(.85 1)', cube),
  cubepts: g('translate(1 1) scale(.9)', cube) + sq(2, 4, 1, K) + sq(14, 3, 1, K) + sq(3, 14, 1, K) + sq(14, 13, 1, K),
  wedge: p('M2 8l12-5v13L3 11z', 'url(#gFace)', B) + sq(1, 7, 2) + sq(13, 7, 2), rotslab: p('M2 12l8-3 6 2-7 5-6-1z', 'url(#gFace)', B) + p('M3 7c3-4 7-5 11-2M12 2l2 3-3 1', 'none', K),
  holeslab: slab + c(8, 9.500, 2, '#eef', B), bslab: slab + p('M5 7h4v3H6v3h4', 'none', '#fff', 1.100), doorslab: slab + p('M6 14V7l3 .5V15', '#eef', B),
  gridholes: p('M2.500 3h13v12h-13z', '#5a76d8', B) + [5.5, 9, 12.5].map(x => c(x, 6.500, 1.300, '#fff', B, .6) + c(x, 11.500, 1.300, '#fff', B, .6)).join(''),
  gridholes2: p('M2 2h14v14H2z', '#5a76d8', B) + [5, 9, 13].map(x => [5, 9, 13].map(y => c(x, y, 1.300, '#fff', B, .6)).join('')).join(''),
  redslab: slab + p('M5 6l6 7M11 6l-6 7', 'none', '#d11', 2),
  arrow, squares: sq(3, 10, 4) + sq(11, 3, 4, '#86a0ee') + p('M8 10l3-3'), trimk: p('M2 9h8l5 5-2 2-4-4H2z', '#fff', '#444') + p('M8 2h4v8z', '#1e3a95', B), splitk: p('M2 9h14v4H2z', '#fff', '#444') + p('M8 2h4v9z', '#1e3a95', B),
  join: g('translate(6 6) scale(.68)', piece('#ffefca', '#6b4300')) + g('scale(.72)', piece('#f5ab1d', '#6b4300')), burst: p('M3 16L2 7l4 4 1-8 3 7 6-6-3 6 3 1-6 5z', '#f6a51d', '#a35d00', .9),
  ball: ball(9, 9, 5.500) + p('M3.500 9h11M9 3.500c3 4 3 7 0 11', 'none', B, .7), ballpts: ball(9, 9, 5) + p('M3 12c4 0 9-4 12-7', 'none', K) + c(3.500, 12, 1.200, '#fff') + c(14.500, 5, 1.200, '#fff'),
  ellips: oval(9, 9, 6, 4, 'url(#gBlue)') + p('M3 9h12', 'none', B, .7), parab: p('M3 6c4-2 8-2 12-1-1 5-4 9-6 9S4 10 3 6z', 'url(#gBlue)', B),
  cone: p('M9 3l5 11c-3 2-7 2-10 0z', 'url(#gFace)', B), tcone: p('M7 5c1-1 3-1 4 0l3 9c-3 2-7 2-10 0z', 'url(#gFace)', B), pyramid: p('M9 3l6 9-6 4-6-4zM9 3v13', 'url(#gFace)', B), tpyr: p('M7 7l4-1 4 5-6 3-6-3z', 'url(#gFace)', B),
  cyl: p('M4 5v9c2 2 8 2 10 0V5', 'url(#gFace)', B) + oval(9, 5, 5, 2, '#b5c5fb'),
  tube: p('M4 5v9c2 2 8 2 10 0V5', 'url(#gFace)', B) + oval(9, 5, 5, 2, '#dde5fd') + oval(9, 5, 2, .8, '#234'),
  torus: oval(9, 9, 5.5, 3.5, 'url(#gBlue)') + oval(9, 8.5, 2, .8, '#eef'),
  pipe: p('M9 4C3 5 4 15 14 13', 'none', B, 5.500) + p('M9 4C3 5 4 15 14 13', 'none', '#6482e4', 3.700), pipe2: p('M9 4C3 5 4 15 13 13', 'none', B, 5.500) + p('M9 4C3 5 4 15 13 13', 'none', '#6482e4', 3.700) + c(13.500, 12.500, 2, '#fff') + c(10, 4, 2, '#fff'),
  slab: p('M4 5c3-3 7 1 10-2v10c-3 3-7-1-10 2z', 'url(#gFace)', B), curtain: p('M2 7c4 3 10 3 14 0v8c-4 2-10 2-14 0z', 'url(#gFace)', B) + oval(9, 3, 3.5, 1.5, '#fff', '#888') + p('M5 11c3 1 6 1 8 0v2c-3 1-5 1-8 0z', '#cfdafb', 'none'),
  dot: c(9, 9, 1.700, '#fff', '#555'), poly: p('M3 15L8 4l7 8', 'none', '#555') + sq(2, 14, 1, K) + sq(7, 4, 1, K) + sq(14, 11, 1, K),
  curve: p('M5 14h6c7-1 4-10-1-10H5', 'none', '#666') + sq(3, 3, 2) + sq(12, 1, 2) + sq(3, 13, 2) + sq(13, 13, 2), circle: c(9, 9, 6.500, 'none', '#666') + p('M9 9l4-4', 'none', '#555') + sq(8, 8, 1, K) + sq(13, 4, 1, K),
  ellipse: oval(9, 9, 6.5, 4.5, 'none', '#666') + sq(8, 3, 2) + sq(8, 8, 2) + sq(14, 8, 2), arc: dashed(p('M4 15V4l0 0M15 10L4 15', 'none', '#777'), '2 1') + p('M4 4c6 0 9 3 11 6', 'none', '#333') + sq(3, 3, 1, K) + sq(3, 14, 1, K) + sq(14, 9, 1, K),
  rect: p('M3 5h12v8H3z', 'none', '#444') + sq(3, 4, 1, K) + sq(14, 12, 1, K), hexa: p('M5.500 4h6l4 5-4 5h-6L2.500 9z', 'none', '#666') + p('M9 9h6') + c(9, 9, 1.500, '#fff'),
  fillet: p('M4 4h5c4 0 5 4 5 9', 'none', K, 1.600) + sq(2, 3, 2) + sq(13, 13, 2), srf: p('M5 5l9-1-2 10-8 1z', 'url(#gFace)', B) + p('M9 4L8 15M4 10l10-2', 'none', '#dde', .8) + sq(4, 3, 2) + sq(13, 2, 2) + sq(2, 13, 2) + sq(11, 13, 2),
  bend: p('M3 6l5-3c5 1 7 5 6 9-2-4-5-5-8-4z', '#eef1fb', '#445') + p('M6 8c4-2 7 1 8 7-3-4-5-4-8-7z', '#4f6ed8', B), twoballs: ball(11, 7, 5) + ball(6, 12, 4.500), mesh: p('M3 12l3-7 10-2-3 8-9 4zM6 6l7 5M9 13l4-9', 'url(#gFace)', B),
  rings: c(9, 6, 3.500, '#ccd', '#111', 1.500) + c(6, 11, 3.500, '#fff', '#111', 1.500) + c(12, 11, 3.500, '#223080', '#111', 1.500), tricirc: c(9, 5, 2.500, '#b6bdf0', '#667') + c(5, 12, 2.500, '#fff', '#667') + c(13, 12, 2.500, '#1c2a80', '#111'),
  curveedit: p('M2 5c5-1 10 3 12 10', 'none', K, 1.400) + c(7, 5, 1.300, '#fff') + c(13, 11, 1.300, '#fff'), curvepts: p('M3 5c7-1 9 4 10 11', 'none', K, 1.500) + p('M2 2h8l4 5v8', 'none', '#888', .8) + c(9, 2, 1.300, '#fff') + c(15, 9, 1.300, '#fff'),
  text: p('M3 3l12 1v4l-3-1v9H8V7L3 7z', 'url(#gFace)', B), array: sq(3, 3, 3) + sq(10, 4, 5, '#7793ea', B) + sq(7, 8, 4, '#7793ea', B) + sq(3, 12, 3) + sq(12, 12, 3, '#7793ea', B), rotbox: p('M3 4h3v10H3z', '#fff') + p('M9 13l5-7 3 2-5 7z', 'url(#gFace)', B) + p('M8 5c3 0 4 1 4 3'),
  cubecut: cube + p('M6 12c2-3 5-1 5 3l-2 1-3-1z', '#fff', '#444'), extrude: p('M3 13h11l2 2H2z', '#6482e4', B) + p('M5 12V4M9 12V4M13 12V4', 'none', '#fff', 2),
  gridpts: [3, 8, 13].map(x => [3, 8, 13].map(y => sq(x - 1, y - 1, 3, '#eef1fd', B)).join('')).join(''), align: p('M9 2v14', 'none', '#a22') + sq(6, 2, 5, '#f4dede', '#a22') + sq(7, 8, 3, '#fff', '#a22') + sq(6, 12, 4, '#fff', '#a22'),
  pair: p('M3 6l4-2v9l-4 2z', '#fff', '#555') + p('M9 5l4-3 2 2-3 10-5 2z', 'url(#gFace)', B), more: p('M10 6.500l2.500 2.500L10 11.500M14 6.500l2.500 2.500L14 11.500', 'none', K, 1.200),
  bulbsel: bulb('#999') + p('M2 2h6v6H2z', '#f3e62a', K) + p('M2 2h6L2 8z', K, 'none'), locksel: g('translate(3 3) scale(.85)', lock) + p('M2 2h6v5H2z', '#f3e62a', K) + p('M2 2h6L2 7z', K, 'none'),
  colorsel: p('M3 5h11v8H3z', '#e9e24a', '#fff') + p('M3 5h4v8H3z', '#e4a04e', 'none') + p('M10 6h4v6h-4z', '#7cc95a', 'none'), glow: c(9, 9, 5.500, '#ffc81f', '#eab000') + c(9, 8, 3, '#fffbe0', '#ffe14c'),
  key: c(7, 6, 3, '#f4bd22', '#6b4b00') + p('M9 8l5 5-2 2-5-6', '#f4bd22', '#6b4b00'), tag: p('M6 8l3-2 5 6-3 3-5-4z', '#f4bd22', '#6b4b00') + p('M7 8C3 4 8 5 6 2', 'none', '#777'), tags: p('M3 10l4-5 4 2-5 6zM9 11l2-6 4 3-2 6z', '#e2ae22', '#6b4b00') + p('M5 8l3 3'),
  curvesel: dashed(p('M5 4h6c6 2 5 8-1 10H5', 'none', '#444'), '3 1') + sq(4, 3, 2) + sq(4, 13, 2), ptsel: [3, 8, 13].map(x => [3, 8, 13].map(y => sq(x, y, 2, x > 3 && y < 10 ? '#ffe98a' : '#fff', x > 3 && y < 10 ? '#cba100' : K)).join('')).join(''),
  boxsel: p('M4 6l5-2 5 2v7l-5 2-5-2z', '#f1c233', '#4e3a00', 1.200) + p('M6 8v4l3 1V8M11 12V8l2-1', 'none', '#4e3a00'), linksel: p('M8 4v8l4 2', 'none', K, 1.400) + c(7.500, 4, 1.300, '#fff') + c(12, 14, 1.300, '#fff'), plate: p('M3 13l3-6 8-2 1 2-4 6-7 2z', '#a5b5f0', '#5266b0'), fence: p('M4 4v10M8 4v10M12 4v10M15 4v10M2 7h14M2 11h14', 'none', '#8a6a3b', 1.500),
  gauge: c(9, 9, 6.800, '#f7d9b0', '#444', 1.200) + p('M5 6l5 4', 'none', K, 1.800), vee: p('M4 4c1 7 2 10 5 11 3-1 4-4 5-11', 'none', '#444') + sq(3, 3, 2) + sq(13, 3, 2) + sq(8, 14, 2), veedash: dashed(p('M4 4c1 7 2 10 5 11 3-1 4-4 5-11', 'none', '#444', 1.300), '3 2'),
  sun: g('translate(1 0) scale(.9)', p(gearPath, '#b9551a', '#5e2205') + c(9, 10, 3.500, '#f29a38', '#7b3207')), bell: p('M9 2c4 0 5 3 5 9l2 3H2l2-3c0-6 1-9 5-9zM7 15h4v2H7z', '#1463c6', '#0b3878'), helpbook: p('M2 3h14v13H2z', '#3a58b4', '#223') + p('M4 6h10v7H4z', '#cad9fa', 'none') + p('M7 7h4M9 8v4', 'none', '#225'),
  framebox: p('M3 4h12v10H3z', '#fff', '#a77'),
  xgray: p('M4 4l10 10M14 4L4 14', 'none', '#999', 1.600), upgray: tri('M3 12l6-7 6 7z'), downgray: tri('M3 6l6 7 6-7z'), leftgray: tri('M13 2v13L5 9z'), filter: p('M3 2h13l-5 7v8l-3-2V9z', '#2d56c4', '#112', .8), listgray: doc('#ddd', '#999') + p('M6 8h7M6 11h7M6 14h7', 'none', '#aaa'),
  hammer: p('M3 6l4-4h5l4 4-2 2-3-3-5 3z', '#222', '#111') + p('M10 6l-6 9', 'none', '#222', 2.200) + p('M10 7l5 7', 'none', '#444', 1.600),
  layerarc: layerS + p('M12 4C6 1 2 5 4 11', 'none', '#888', 1.300), layerarc2: g('translate(0 -2)', layerS) + layerS, layerarrow: layerS + p('M1 3c5 0 6 1 10 3M3 1L1 3l2 3', 'none', '#777'), layercheck: layerS + p('M6 6l3 3 6-7', 'none', '#111', 1.600) + p('M12 4C6 1 2 5 4 11', 'none', '#888', 1.300),
  bulblay: g('translate(3 0) scale(.7)', bulb('#f5e470')) + p('M4 12l4 4 7-4', 'none', '#888', 1.300), bulbgray: g('translate(3 0) scale(.7)', bulb('#aaa')) + p('M4 12l4 4 7-4', 'none', '#888', 1.300), layerbulb: layerS + g('scale(.6)', bulb('#f5e470')), layerdoc: p('M1 2h7v11H1z', '#ddd', '#888') + layerS,
  smallbulb: p('M6 12C6 9 4 9 4 6a5 5 0 0 1 10 0c0 3-2 3-2 6z', '#ffee7a', '#6b5c10', 1.200) + p('M7 14h4v2H7z', '#ccb', '#665', 1), unlock: p('M9 9V5c0-4 6-4 6 0v1', 'none', '#444', 1.400) + p('M2 8h11v8H2z', '#f5dd55', '#5d4c08', 1.200) + p('M2 12h11', 'none', '#8b761a'), tick: p('M2 9l4 5L16 4', 'none', '#222', 1.800),
};

const draw = (name, extra = '') => `<svg viewBox="0 0 18 18" aria-hidden="true">${icons[name]}${extra}</svg>`;

document.querySelectorAll('[data-icon]').forEach(el => { el.innerHTML = draw(el.dataset.icon); });

document.querySelectorAll('[data-tools]').forEach(bar => {
  bar.innerHTML = bar.dataset.tools.split(' ').map(item => {
    if (item === '|') return '<span class="sep"></span>';
    if (item === '||') return '<span class="sep double"></span>';
    const name = item.replace(/[+*^]/g, '');
    const flyout = item.endsWith('+') ? '<path d="M18 14v4h-4z" fill="#555"/>' : '';
    const corners = item[0] === '^' ? p('M14 1.500h2.500V4M1.500 14v2.500H4') : '';
    return `<button class="tool${item[0] === '*' ? ' boxed' : ''}" aria-label="${name}">${draw(name, flyout + corners)}</button>`;
  }).join('');
});

const layers = [
  ['', '#000'], ['', '#ef3f8a'], ['', '#000'], ['ereni', '#b5690f'], ['aveny', '#4c8a4c'], ['ng', '#dcfccb'],
  ['', '#000'], ['', '#3c3c3c'], ['', '#bdbdbd'], ['', '#968a90'], ['', '#646464'], ['', '#000'],
  ['', '#067a06'], ['', '#0000f0'], ['eni', '#ea4a34'], ['', '#000'], ['z', '#ff7f00'], ['anglaze_kety', '#0ff0f0'],
];
document.getElementById('layer-rows').innerHTML = layers.map(([name, color], i) => `<tr>
  <td><span class="${name.length > 6 ? 'full' : ''}">${name}</span></td>
  <td>${i ? '' : draw('tick')}</td><td>${i ? draw('smallbulb') : ''}</td><td>${i ? draw('unlock') : ''}</td>
  <td><i class="swatch" style="background:${color}"></i></td><td></td></tr>`).join('');
```
